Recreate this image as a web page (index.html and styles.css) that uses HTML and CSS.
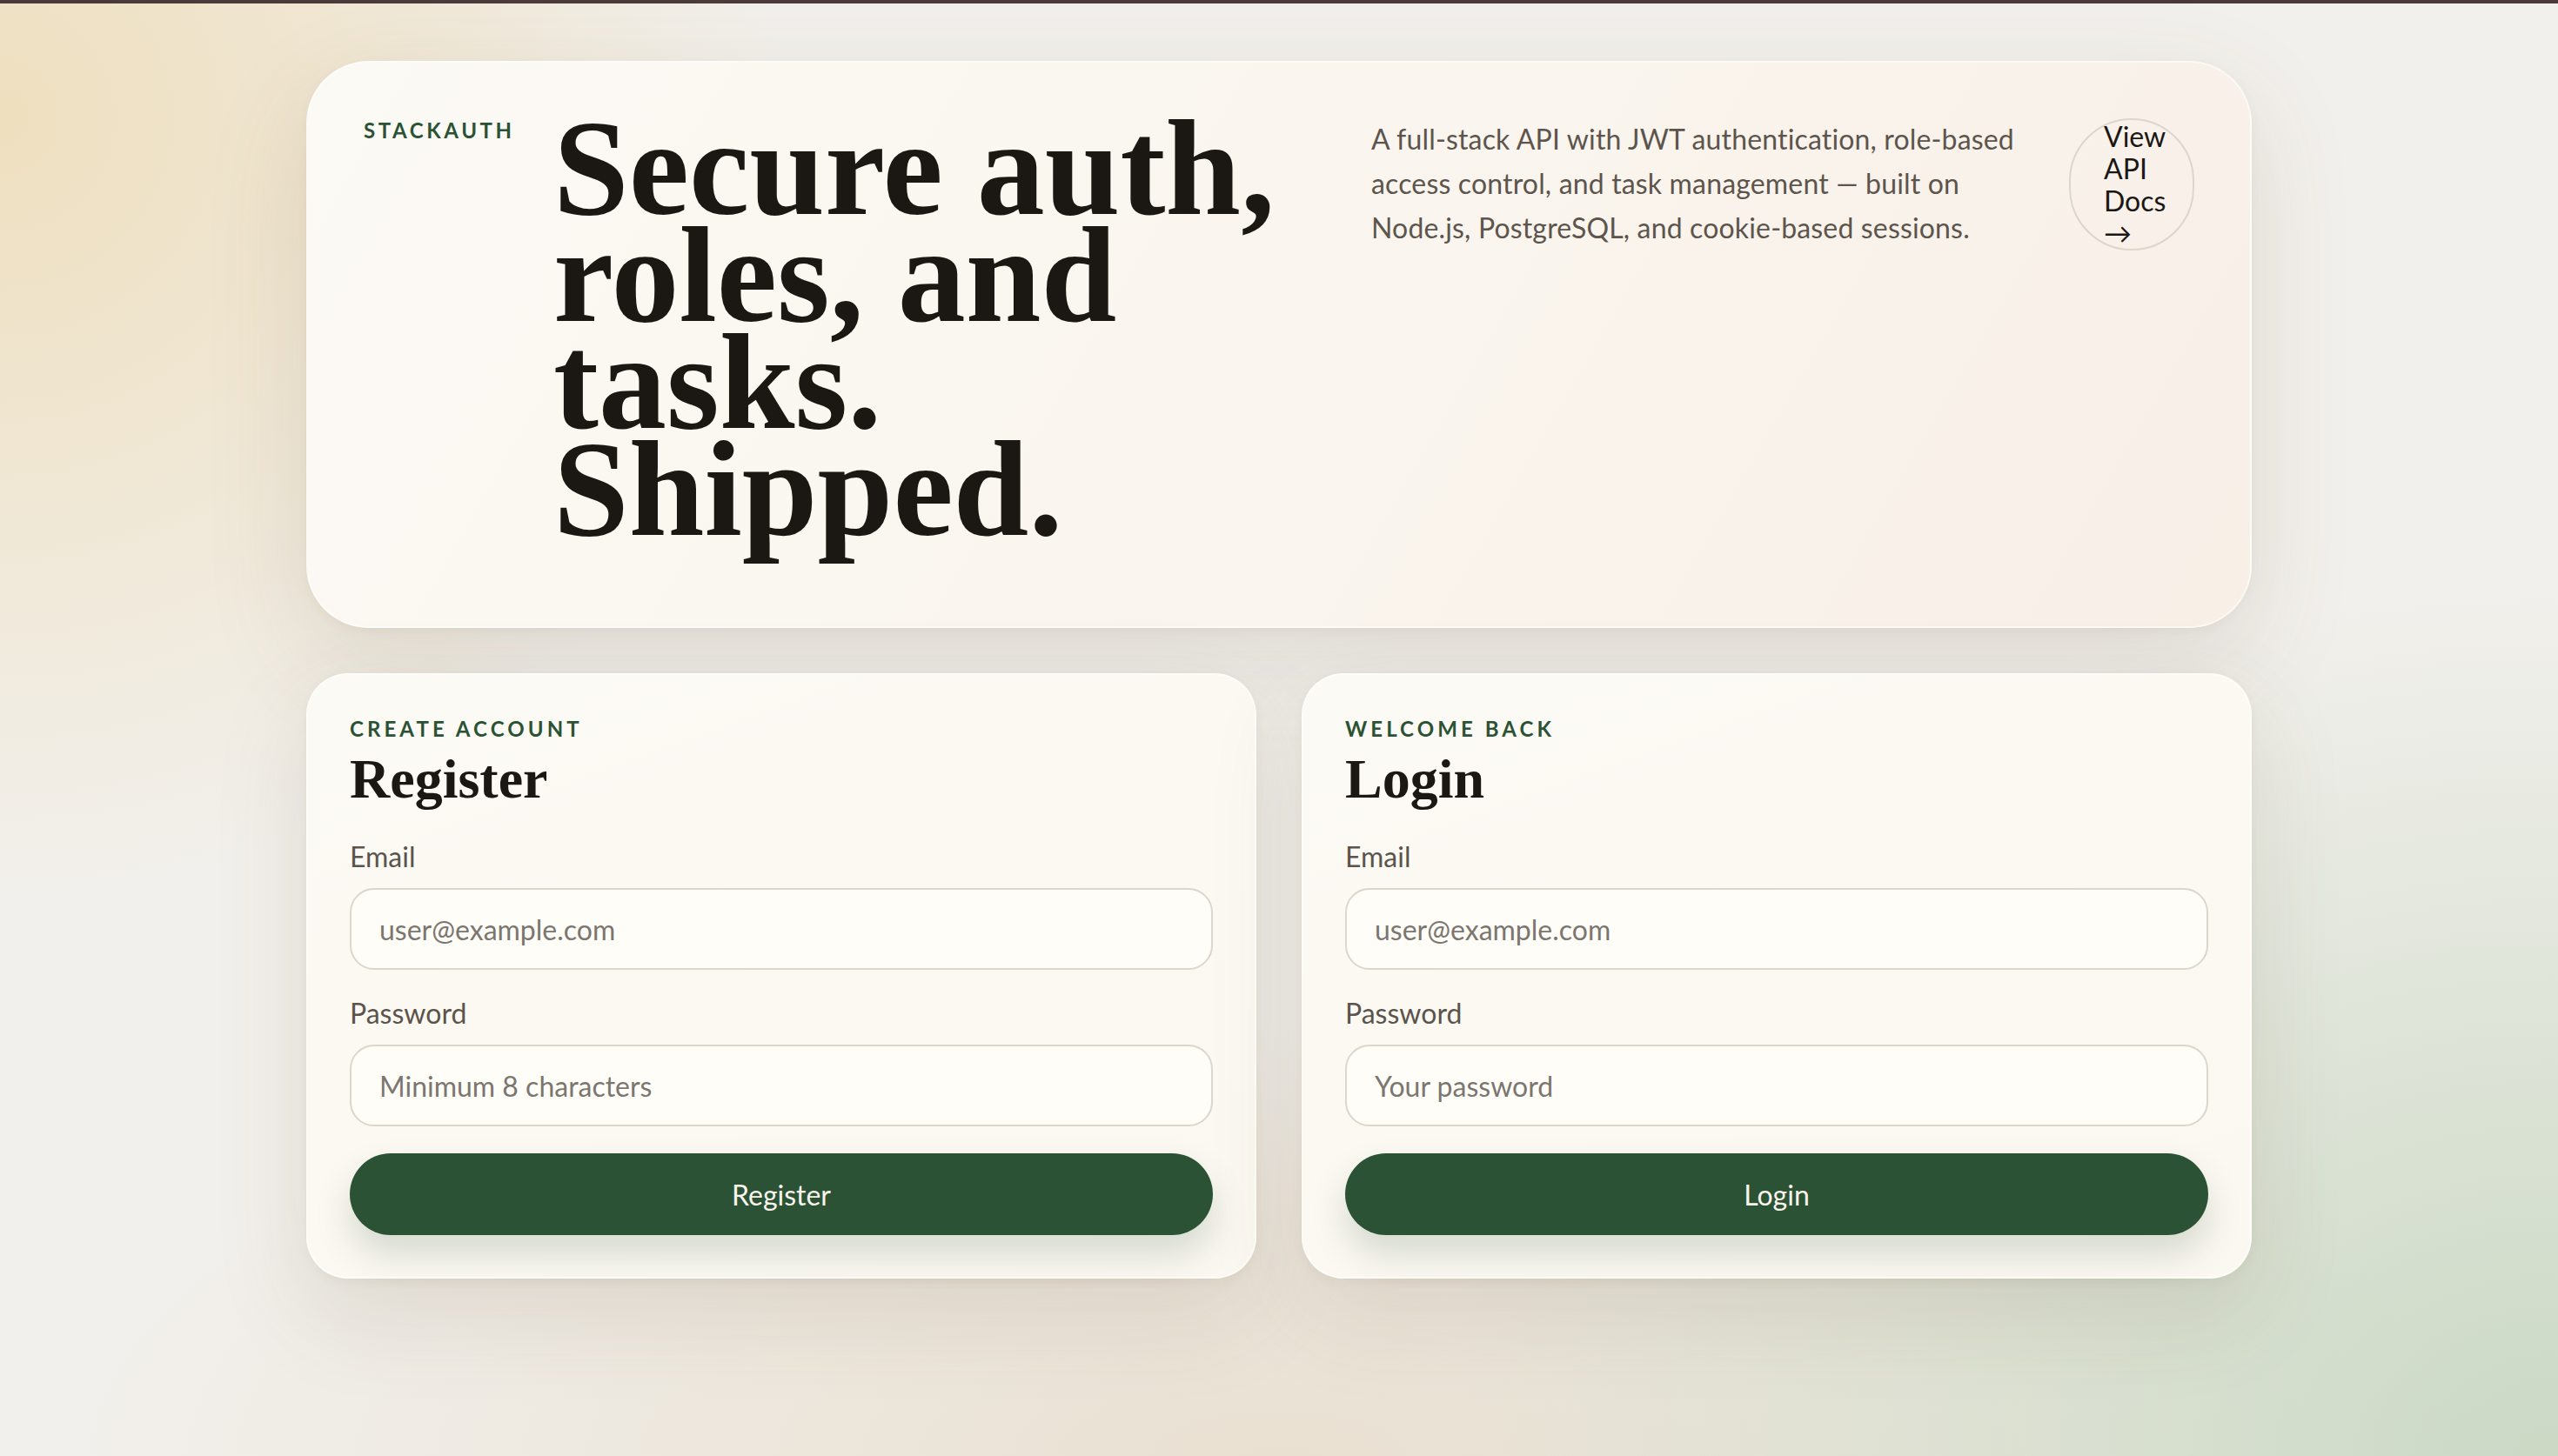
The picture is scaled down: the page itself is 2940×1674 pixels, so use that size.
FILE: index.html
```html
<!DOCTYPE html>
<html lang="en">
<head>
<meta charset="utf-8">
<title>StackAuth</title>
<link rel="stylesheet" href="styles.css">
</head>
<body>
<main class="page">
  <section class="hero">
    <div class="brand">STACKAUTH</div>
    <h1 class="hero-title">Secure auth, roles, and tasks. Shipped.</h1>
    <p class="hero-text">A full-stack API with JWT authentication, role-based access control, and task management — built on Node.js, PostgreSQL, and cookie-based sessions.</p>
    <a class="docs-btn" href="#">View API Docs →</a>
  </section>
  <section class="forms">
    <form class="card">
      <div class="eyebrow">CREATE ACCOUNT</div>
      <h2 class="card-title">Register</h2>
      <label class="field">
        <span class="field-label">Email</span>
        <input class="input" type="email" placeholder="user@example.com">
      </label>
      <label class="field">
        <span class="field-label">Password</span>
        <input class="input" type="password" placeholder="Minimum 8 characters">
      </label>
      <button class="btn" type="button">Register</button>
    </form>
    <form class="card">
      <div class="eyebrow">WELCOME BACK</div>
      <h2 class="card-title">Login</h2>
      <label class="field">
        <span class="field-label">Email</span>
        <input class="input" type="email" placeholder="user@example.com">
      </label>
      <label class="field">
        <span class="field-label">Password</span>
        <input class="input" type="password" placeholder="Your password">
      </label>
      <button class="btn" type="button">Login</button>
    </form>
  </section>
</main>
</body>
</html>
```
FILE: styles.css
```css
* { box-sizing: border-box; }

html, body { height: 100%; }

body {
  margin: 0;
  border-top: 4px solid #4a3a3a;
  min-height: 100vh;
  font-family: "Lato", "Liberation Sans", sans-serif;
  color: #1c1915;
  background:
    radial-gradient(ellipse 900px 900px at 0% 8%, rgba(238, 222, 188, 0.95) 0%, rgba(238, 222, 188, 0) 100%),
    radial-gradient(ellipse 1300px 1000px at 100% 100%, rgba(198, 214, 192, 0.9) 0%, rgba(198, 214, 192, 0) 100%),
    radial-gradient(ellipse 1400px 500px at 50% 100%, rgba(232, 222, 206, 0.9) 0%, rgba(232, 222, 206, 0) 100%),
    #f2f0ec;
}

.page {
  width: 2236px;
  margin: 0 auto;
  padding-top: 66px;
}

.hero {
  display: grid;
  grid-template-columns: 166px 888px 1fr 144px;
  column-gap: 52px;
  align-items: start;
  padding: 60px 64px 96px;
  border-radius: 72px;
  background: linear-gradient(120deg, #fcfaf5 0%, #faf6ef 45%, #f8efe7 100%);
  border: 2px solid rgba(255, 255, 255, 0.55);
  box-shadow: 0 40px 120px rgba(90, 70, 40, 0.13), 0 4px 12px rgba(90, 70, 40, 0.05);
}

.brand {
  font-size: 24px;
  line-height: 36px;
  font-weight: 700;
  letter-spacing: 0.15em;
  color: #2b5234;
}

.hero-title {
  margin: 0;
  font-family: "Liberation Serif", "DejaVu Serif", serif;
  font-weight: 700;
  font-size: 156px;
  line-height: 123px;
  color: #1b1814;
}

.hero-text {
  margin: 2px 0 0;
  font-size: 32px;
  line-height: 51px;
  letter-spacing: 0.005em;
  color: #5d554d;
}

.docs-btn {
  display: block;
  margin-top: 4px;
  width: 144px;
  padding: 0 0 0 38px;
  border: 2px solid #ddd6ca;
  border-radius: 999px;
  font-size: 32px;
  line-height: 37px;
  color: #1a1714;
  text-decoration: none;
}

.forms {
  display: grid;
  grid-template-columns: 1fr 1fr;
  gap: 52px;
  margin-top: 52px;
}

.card {
  margin: 0;
  padding: 46px 48px 48px;
  border-radius: 48px;
  background: linear-gradient(160deg, #fcfaf4 0%, #fbf8f1 100%);
  border: 2px solid rgba(255, 255, 255, 0.6);
  box-shadow: 0 40px 110px rgba(90, 70, 40, 0.13), 0 4px 12px rgba(90, 70, 40, 0.05);
}

.eyebrow {
  margin-bottom: 4px;
  font-size: 24px;
  line-height: 31px;
  font-weight: 700;
  letter-spacing: 0.17em;
  color: #2b5234;
}

.card-title {
  margin: 0 0 27px;
  font-family: "Liberation Serif", "DejaVu Serif", serif;
  font-weight: 700;
  font-size: 64px;
  line-height: 77px;
  color: #1b1814;
}

.field {
  display: block;
  margin-bottom: 26px;
}

.field-label {
  display: block;
  margin-bottom: 12px;
  font-size: 32px;
  line-height: 48px;
  color: #5b544c;
}

.input {
  display: block;
  width: 100%;
  height: 94px;
  padding: 0 32px;
  border: 2px solid #dcd6cc;
  border-radius: 28px;
  background: #fffdf8;
  font-family: "Lato", "Liberation Sans", sans-serif;
  font-size: 32px;
  color: #1c1915;
  outline: none;
}

.input::placeholder { color: #7b766f; }

.btn {
  display: block;
  width: 100%;
  height: 94px;
  margin-top: 31px;
  border: 0;
  border-radius: 999px;
  background: #2b5234;
  color: #f7f4ec;
  font-family: "Lato", "Liberation Sans", sans-serif;
  font-size: 32px;
  box-shadow: 0 22px 40px rgba(43, 82, 52, 0.18);
  cursor: pointer;
}
```
